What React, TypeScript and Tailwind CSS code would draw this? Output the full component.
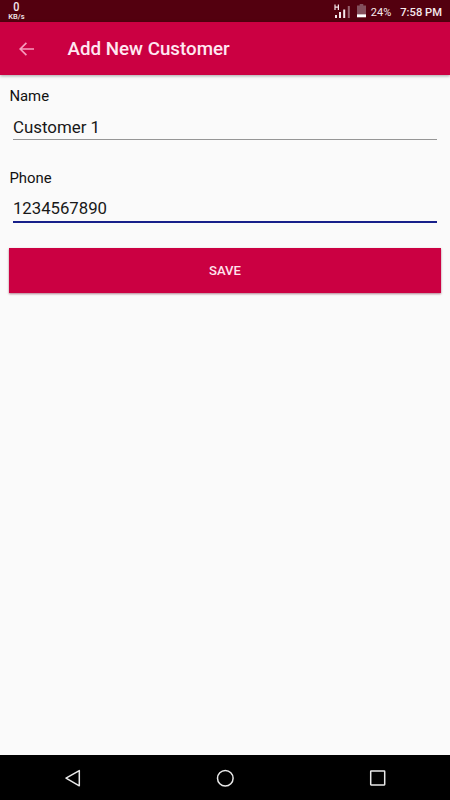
import { useState } from 'react';

function SignalIcon() {
  return (
    <svg width="17" height="16" viewBox="0 0 17 16" className="shrink-0">
      <path d="M1 1.4v5.6M4.4 1.4v5.6M1 4.2h3.4" stroke="#f3e6ea" strokeWidth="1.2" fill="none" />
      <path d="M1 12h2v3H1zM5 9h2v6H5zM9.2 6.6h2V15h-2z" fill="#f3e6ea" />
      <path d="M13.8 3h2v12h-2z" fill="#99626f" />
    </svg>
  );
}

function BatteryIcon() {
  return (
    <svg width="9" height="14" viewBox="0 0 9 14" className="shrink-0">
      <path d="M2.7 0h3.6v1.4H9v9H0v-9h2.7z" fill="#83505d" />
      <path d="M0 10.3h9v3H0z" fill="#fff" />
    </svg>
  );
}

function StatusBar() {
  return (
    <div className="flex h-[22px] shrink-0 items-center bg-[#53000f] text-[#f6e9ed]">
      <div className="flex h-full w-[33px] flex-col items-center pt-[1px] font-medium">
        <span className="scale-x-90 text-[12px] leading-[13px]">0</span>
        <span className="text-[7.5px] leading-[5px]">KB/s</span>
      </div>
      <div className="ml-auto flex h-full items-center pr-[8px]">
        <SignalIcon />
        <span className="ml-[6px] flex"><BatteryIcon /></span>
        <span className="ml-[5px] w-[20.5px] whitespace-nowrap pt-[3px] text-[11px] leading-[20px]">24%</span>
        <span className="ml-[9px] whitespace-nowrap pt-[3px] text-[11.2px] font-medium leading-[20px]">7:58 PM</span>
      </div>
    </div>
  );
}

function AppBar() {
  return (
    <header className="relative flex h-[53px] shrink-0 items-center bg-[#cb0042] pl-[19px] shadow-[0_1px_3px_rgba(0,0,0,0.35)]">
      <button aria-label="Back" className="flex">
        <svg width="15" height="14" viewBox="0 0 15 14" fill="none" stroke="#f79bbd" strokeWidth="1.7">
          <path d="M15 7H1.5M7.4 .8L1.2 7l6.2 6.2" />
        </svg>
      </button>
      <h1 className="ml-[33.5px] whitespace-nowrap pt-px text-[18.75px] font-medium leading-6 text-[#ffe8f1]">Add New Customer</h1>
    </header>
  );
}

type FieldProps = {
  label: string;
  value: string;
  active?: boolean;
  onChange: (value: string) => void;
};

function Field({ label, value, active = false, onChange }: FieldProps) {
  return (
    <label className="block h-[82px]">
      <span className="block h-[22px] text-[14.9px] leading-[22px] text-[#111]">{label}</span>
      <span className="mx-[3.5px] block h-[35px]">
        <input
          value={value}
          onChange={(event) => onChange(event.target.value)}
          className={
            active
              ? 'block h-[34px] w-full border-b-2 border-[#17208a] bg-transparent pt-[6px] text-[16.75px] text-[#181818] outline-none'
              : 'block h-[33px] w-full border-b border-[#969696] bg-transparent pt-[7px] text-[16.9px] text-[#181818] outline-none'
          }
        />
      </span>
    </label>
  );
}

function NavigationBar() {
  return (
    <nav className="flex h-[45px] shrink-0 items-center justify-between bg-black pl-[64px] pr-[63px]">
      <svg width="18" height="20" viewBox="0 0 18 20" fill="none" stroke="#e9e9e9" strokeWidth="1.5" strokeLinejoin="round">
        <path d="M15.3 2.6v15.2L2 10.2z" />
      </svg>
      <svg width="20" height="20" viewBox="0 0 20 20" fill="none" stroke="#e9e9e9" strokeWidth="1.5">
        <circle cx="9.3" cy="10.2" r="7.8" />
      </svg>
      <svg width="18" height="20" viewBox="0 0 18 20" fill="none" stroke="#e9e9e9" strokeWidth="1.5">
        <rect x="1.7" y="3" width="14" height="14" rx=".4" />
      </svg>
    </nav>
  );
}

export default function App() {
  const [name, setName] = useState('Customer 1');
  const [phone, setPhone] = useState('1234567890');

  return (
    <div className="flex h-[800px] w-[450px] flex-col overflow-hidden bg-[#fafafa] font-['Roboto',sans-serif]">
      <StatusBar />
      <AppBar />
      <main className="flex-1 px-[9.4px] pt-[10px]">
        <Field label="Name" value={name} onChange={setName} />
        <Field label="Phone" value={phone} onChange={setPhone} active />
        <button className="mt-[-1px] block h-[45px] w-full bg-[#cb0042] pt-px text-[13.1px] font-medium text-[#ffe3ed] shadow-[0_1px_2px_rgba(100,0,30,0.5)]">
          SAVE
        </button>
      </main>
      <NavigationBar />
    </div>
  );
}
